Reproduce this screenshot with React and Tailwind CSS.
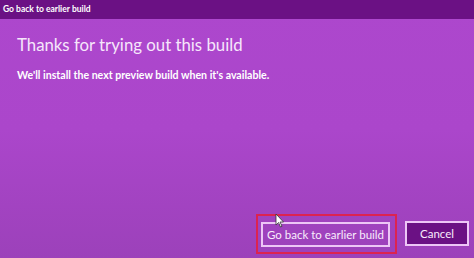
export default function App() {
  return (
    <div className="relative w-[474px] h-[258px] overflow-hidden bg-gradient-to-b from-[#ad47cd] via-[#ab46cb] to-[#9c41ba] flex flex-col" style={{ fontFamily: 'Lato, "Open Sans", sans-serif' }}>
      <div className="h-[19px] bg-[#6b1184] text-white text-[8.5px] font-bold pl-[3px] flex items-center">
        Go back to earlier build
      </div>
      <div className="flex-1 flex flex-col px-[17px]">
        <h1 className="mt-[14px] text-[#f6e6fb] text-[16.8px] font-normal leading-[24px]">
          Thanks for trying out this build
        </h1>
        <p className="mt-[11px] text-white text-[10.6px] font-bold leading-[14px]">
          We'll install the next preview build when it's available.
        </p>
        <div className="mt-auto mb-[4px] flex items-center justify-end gap-[8px] -mr-[12px]">
          <div className="border-2 border-[#dc2350] pl-[3px] pr-[5px] py-[5px]">
            <button className="h-[25px] w-[129px] border-2 border-[#edc6f6] text-[#f9ecfc] text-[11.5px] leading-none whitespace-nowrap">
              Go back to earlier build
            </button>
          </div>
          <button className="h-[25px] w-[64px] border-2 border-[#edc6f6] bg-[#6b1184] text-[#f9ecfc] text-[11.5px] leading-none whitespace-nowrap">
            Cancel
          </button>
        </div>
      </div>
      <svg className="absolute left-[275px] top-[213px]" width="10" height="15" viewBox="0 0 10 15">
        <path d="M1 1 L1 12 L3.5 9.5 L5.5 14 L7 13.3 L5 9 L8.5 9 Z" fill="#fff" stroke="#333" strokeWidth="0.8" />
      </svg>
    </div>
  )
}
